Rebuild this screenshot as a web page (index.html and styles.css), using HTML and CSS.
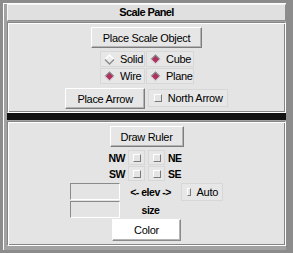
FILE: index.html
```html
<!DOCTYPE html>
<html lang="en">
<head>
    <meta charset="UTF-8">
    <title>Scale Panel</title>
    <link rel="stylesheet" href="styles.css">
</head>
<body>

<div class="window">
    <div class="title">Scale Panel</div>

    <div class="section first">
        <button class="btn">Place Scale Object</button>

        <div class="radios">
            <label class="cell radio">
                <svg class="dia" viewBox="0 0 11 11"><polygon points="5.5,1 10,5.5 5.5,10 1,5.5" fill="#ececec"/><path d="M1 5.5 L5.5 1 L10 5.5" fill="none" stroke="#fff" stroke-width="1.4"/><path d="M1 5.5 L5.5 10 L10 5.5" fill="none" stroke="#8a8a8a" stroke-width="1.4"/></svg>
                Solid
            </label>
            <label class="cell radio">
                <svg class="dia" viewBox="0 0 11 11"><polygon points="5.5,1 10,5.5 5.5,10 1,5.5" fill="#b03060"/><path d="M1 5.5 L5.5 1 L10 5.5" fill="none" stroke="#8a8a8a" stroke-width="1.2"/><path d="M1 5.5 L5.5 10 L10 5.5" fill="none" stroke="#d8d8d8" stroke-width="1.2"/></svg>
                Cube
            </label>
            <label class="cell radio">
                <svg class="dia" viewBox="0 0 11 11"><polygon points="5.5,1 10,5.5 5.5,10 1,5.5" fill="#b03060"/><path d="M1 5.5 L5.5 1 L10 5.5" fill="none" stroke="#8a8a8a" stroke-width="1.2"/><path d="M1 5.5 L5.5 10 L10 5.5" fill="none" stroke="#d8d8d8" stroke-width="1.2"/></svg>
                Wire
            </label>
            <label class="cell radio">
                <svg class="dia" viewBox="0 0 11 11"><polygon points="5.5,1 10,5.5 5.5,10 1,5.5" fill="#b03060"/><path d="M1 5.5 L5.5 1 L10 5.5" fill="none" stroke="#8a8a8a" stroke-width="1.2"/><path d="M1 5.5 L5.5 10 L10 5.5" fill="none" stroke="#d8d8d8" stroke-width="1.2"/></svg>
                Plane
            </label>
        </div>

        <div class="arrow-row">
            <button class="btn">Place Arrow</button>
            <label class="cell check"><span class="box"></span>North Arrow</label>
        </div>
    </div>

    <div class="divider"></div>

    <div class="section second">
        <button class="btn ruler">Draw Ruler</button>

        <div class="corners">
            <span class="lbl right">NW</span>
            <span class="cell mini"><span class="box"></span></span>
            <span class="cell mini"><span class="box"></span></span>
            <span class="lbl">NE</span>
            <span class="lbl right">SW</span>
            <span class="cell mini"><span class="box"></span></span>
            <span class="cell mini"><span class="box"></span></span>
            <span class="lbl">SE</span>
        </div>

        <div class="elev">
            <input class="entry" type="text">
            <span class="lbl mid">&lt;- elev -&gt;</span>
            <label class="cell check"><span class="box"></span>Auto</label>
            <input class="entry" type="text">
            <span class="lbl mid">size</span>
        </div>

        <button class="btn color">Color</button>
    </div>
</div>

</body>
</html>
```

FILE: styles.css
```css
body {
    margin: 0;
    background-color: #8c8c8c;
    font-family: "Liberation Sans", Arial, sans-serif;
    font-size: 11px;
    letter-spacing: -0.3px;
    color: #000;
}
.window {
    width: 279px;
    height: 246px;
    margin: 3px 0 0 3px;
    padding-left: 3px;
    border-left: 1px solid #fff;
    border-top: 1px solid #fff;
    background-color: #a2a2a2;
}
.title {
    height: 15px;
    line-height: 15px;
    text-align: center;
    font-weight: bold;
    letter-spacing: -0.6px;
    background-color: #e0e0e0;
    border: 1px solid;
    border-color: #f6f6f6 #8e8e8e #8e8e8e #f6f6f6;
}
.section {
    display: flex;
    flex-direction: column;
    align-items: center;
    background-color: #e4e4e4;
    border: 1px solid;
    border-color: #858585 #fff #fff #858585;
    box-shadow: inset 1px 1px 0 #fff, inset -1px -1px 0 #858585;
}
.first {
    margin-top: 1px;
    height: 86px;
    padding-top: 3px;
}
.second {
    margin-top: 1px;
    height: 120px;
    padding-top: 3px;
}
.divider {
    height: 7px;
    background-color: #111;
}
.btn {
    font: inherit;
    letter-spacing: inherit;
    height: 21px;
    padding: 0 11px;
    background-color: #e6e6e6;
    border: 1px solid;
    border-color: #fff #7d7d7d #7d7d7d #fff;
    box-shadow: inset -1px -1px 0 #b4b4b4;
    margin-top: 1px;
}
.radios {
    display: grid;
    grid-template-columns: 45px 48px;
    gap: 1px;
    margin-top: 3px;
    margin-left: 1px;
}
.cell {
    display: flex;
    align-items: center;
    border: 1px solid #d7d7d7;
    background-color: #e7e7e7;
    box-sizing: border-box;
}
.radio {
    height: 16px;
    padding-left: 3px;
}
.dia {
    width: 11px;
    height: 11px;
    margin-right: 5px;
}
.arrow-row {
    display: flex;
    align-items: center;
    gap: 3px;
    margin-top: 3px;
}
.check {
    height: 18px;
    padding: 0 4px 0 5px;
}
.box {
    width: 6px;
    height: 6px;
    margin-right: 6px;
    background-color: #e4e4e4;
    border: 1px solid;
    border-color: #fff #7a7a7a #7a7a7a #fff;
}
.ruler {
    width: 74px;
    padding: 0;
}
.corners {
    display: grid;
    grid-template-columns: 17px 17px 17px 17px;
    grid-auto-rows: 15px;
    column-gap: 3px;
    row-gap: 1px;
    margin-top: 3px;
}
.lbl {
    font-weight: bold;
    font-size: 10.5px;
    letter-spacing: -0.5px;
    display: flex;
    align-items: center;
}
.right {
    justify-content: flex-end;
}
.mid {
    justify-content: center;
}
.mini {
    justify-content: center;
}
.mini .box {
    margin-right: 0;
}
.elev {
    display: grid;
    grid-template-columns: 50px 61px 42px;
    grid-auto-rows: 17px;
    row-gap: 1px;
    margin-top: 2px;
}
.entry {
    width: 50px;
    height: 17px;
    box-sizing: border-box;
    margin: 0;
    padding: 0;
    background-color: #e4e4e4;
    border: 1px solid;
    border-color: #8a8a8a #fff #fff #8a8a8a;
}
.color {
    width: 69px;
    height: 22px;
    margin-top: 1px;
    background-color: #fff;
    border-color: #fff #8a8a8a #8a8a8a #fff;
}
```
